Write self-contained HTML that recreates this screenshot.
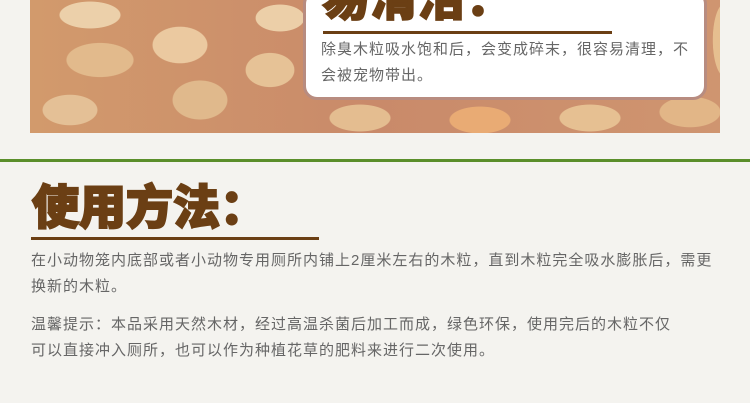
<!DOCTYPE html>
<html><head><meta charset="utf-8"><style>
*{margin:0;padding:0}
body{width:750px;height:403px;overflow:hidden;background:#f4f3ef;position:relative;font-family:"Liberation Sans","Noto Sans CJK SC",sans-serif}
.photo{position:absolute;left:30px;top:0;width:690px;height:133px;
background:
radial-gradient(ellipse 50px 22px at 60px 15px,#ecd0aa 60%,transparent 62%),
radial-gradient(ellipse 55px 28px at 70px 60px,#e2ba8c 60%,transparent 62%),
radial-gradient(ellipse 45px 30px at 150px 45px,#ebc9a0 60%,transparent 62%),
radial-gradient(ellipse 45px 32px at 170px 100px,#e0b98c 60%,transparent 62%),
radial-gradient(ellipse 45px 25px at 40px 110px,#e4c096 60%,transparent 62%),
radial-gradient(ellipse 40px 28px at 240px 70px,#e6c296 60%,transparent 62%),
radial-gradient(ellipse 40px 22px at 250px 18px,#eccfa8 60%,transparent 62%),
radial-gradient(ellipse 50px 22px at 330px 118px,#e4bd90 60%,transparent 62%),
radial-gradient(ellipse 50px 22px at 450px 120px,#e9ab74 60%,transparent 62%),
radial-gradient(ellipse 50px 22px at 560px 118px,#e6c092 60%,transparent 62%),
radial-gradient(ellipse 50px 25px at 660px 112px,#e2b687 60%,transparent 62%),
radial-gradient(ellipse 20px 60px at 695px 40px,#e6bf90 60%,transparent 62%),
linear-gradient(90deg,#d29a6c,#c98a6a 50%,#cf9570);}
.card{position:absolute;left:303px;top:-10px;width:398px;height:104px;background:#fff;border:3px solid #b88c80;border-radius:14px;box-sizing:content-box}
.t1{position:absolute;left:322px;top:-26px;font-size:48px;font-weight:900;color:#6b3f14;line-height:52px;-webkit-text-stroke:1.5px #6b3f14}
.u1{position:absolute;left:323px;top:31px;width:289px;height:3px;background:#6b3f14}
.p1{position:absolute;left:321px;top:37px;width:420px;font-size:15px;letter-spacing:1px;line-height:26px;color:#666;white-space:nowrap}
.green{position:absolute;left:0;top:159px;width:750px;height:3px;background:#5a8e2a}
.t2{position:absolute;left:32px;top:180px;font-size:47px;font-weight:900;color:#6b3f14;line-height:56px;-webkit-text-stroke:2px #6b3f14}
.u2{position:absolute;left:31px;top:237px;width:288px;height:3px;background:#6b3f14}
.p{position:absolute;left:31px;width:720px;font-size:15px;letter-spacing:1px;line-height:26px;color:#666;white-space:nowrap}
</style></head><body>
<div class="photo"></div>
<div class="card"></div>
<div class="t1">易清洁：</div>
<div class="u1"></div>
<div class="p1">除臭木粒吸水饱和后，会变成碎末，很容易清理，不<br>会被宠物带出。</div>
<div class="green"></div>
<div class="t2">使用方法：</div>
<div class="u2"></div>
<div class="p" style="top:248px">在小动物笼内底部或者小动物专用厕所内铺上2厘米左右的木粒，直到木粒完全吸水膨胀后，需更<br>换新的木粒。</div>
<div class="p" style="top:312px">温馨提示：本品采用天然木材，经过高温杀菌后加工而成，绿色环保，使用完后的木粒不仅<br>可以直接冲入厕所，也可以作为种植花草的肥料来进行二次使用。</div>
</body></html>
